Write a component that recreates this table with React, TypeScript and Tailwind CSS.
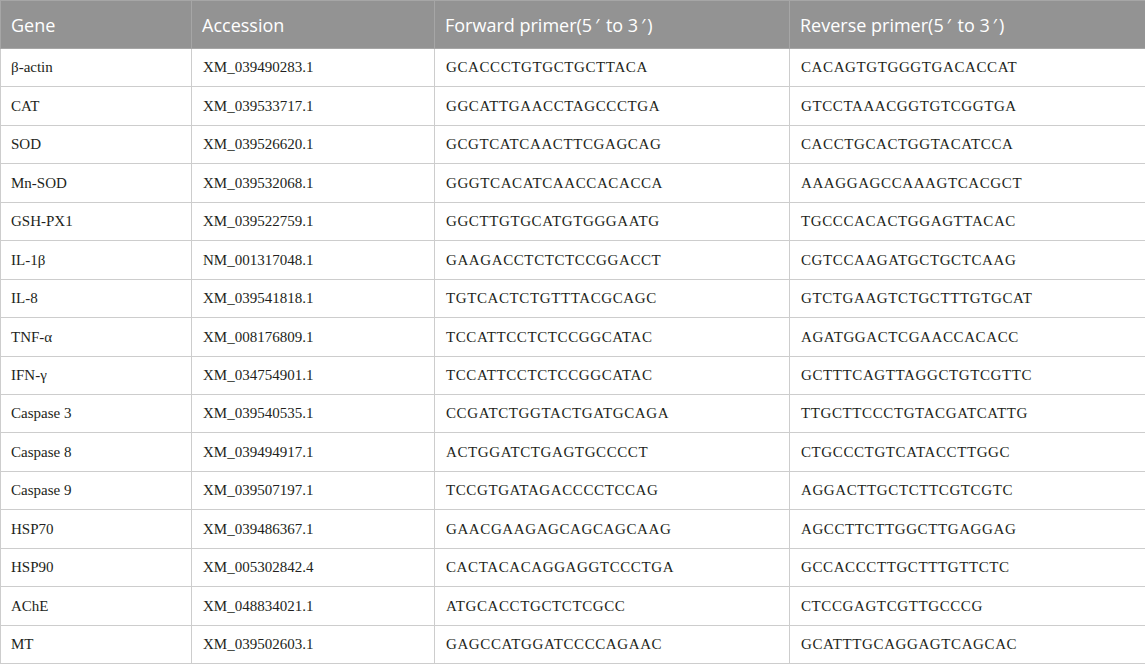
import React from "react";

interface PrimerRow {
    gene: string;
    accession: string;
    forward: string;
    reverse: string;
}

const rows: PrimerRow[] = [
    { gene: "β-actin", accession: "XM_039490283.1", forward: "GCACCCTGTGCTGCTTACA", reverse: "CACAGTGTGGGTGACACCAT" },
    { gene: "CAT", accession: "XM_039533717.1", forward: "GGCATTGAACCTAGCCCTGA", reverse: "GTCCTAAACGGTGTCGGTGA" },
    { gene: "SOD", accession: "XM_039526620.1", forward: "GCGTCATCAACTTCGAGCAG", reverse: "CACCTGCACTGGTACATCCA" },
    { gene: "Mn-SOD", accession: "XM_039532068.1", forward: "GGGTCACATCAACCACACCA", reverse: "AAAGGAGCCAAAGTCACGCT" },
    { gene: "GSH-PX1", accession: "XM_039522759.1", forward: "GGCTTGTGCATGTGGGAATG", reverse: "TGCCCACACTGGAGTTACAC" },
    { gene: "IL-1β", accession: "NM_001317048.1", forward: "GAAGACCTCTCTCCGGACCT", reverse: "CGTCCAAGATGCTGCTCAAG" },
    { gene: "IL-8", accession: "XM_039541818.1", forward: "TGTCACTCTGTTTACGCAGC", reverse: "GTCTGAAGTCTGCTTTGTGCAT" },
    { gene: "TNF-α", accession: "XM_008176809.1", forward: "TCCATTCCTCTCCGGCATAC", reverse: "AGATGGACTCGAACCACACC" },
    { gene: "IFN-γ", accession: "XM_034754901.1", forward: "TCCATTCCTCTCCGGCATAC", reverse: "GCTTTCAGTTAGGCTGTCGTTC" },
    { gene: "Caspase 3", accession: "XM_039540535.1", forward: "CCGATCTGGTACTGATGCAGA", reverse: "TTGCTTCCCTGTACGATCATTG" },
    { gene: "Caspase 8", accession: "XM_039494917.1", forward: "ACTGGATCTGAGTGCCCCT", reverse: "CTGCCCTGTCATACCTTGGC" },
    { gene: "Caspase 9", accession: "XM_039507197.1", forward: "TCCGTGATAGACCCCTCCAG", reverse: "AGGACTTGCTCTTCGTCGTC" },
    { gene: "HSP70", accession: "XM_039486367.1", forward: "GAACGAAGAGCAGCAGCAAG", reverse: "AGCCTTCTTGGCTTGAGGAG" },
    { gene: "HSP90", accession: "XM_005302842.4", forward: "CACTACACAGGAGGTCCCTGA", reverse: "GCCACCCTTGCTTTGTTCTC" },
    { gene: "AChE", accession: "XM_048834021.1", forward: "ATGCACCTGCTCTCGCC", reverse: "CTCCGAGTCGTTGCCCG" },
    { gene: "MT", accession: "XM_039502603.1", forward: "GAGCCATGGATCCCCAGAAC", reverse: "GCATTTGCAGGAGTCAGCAC" },
];

// prime sign sits a little away from the digit, like the original typesetting
const Prime: React.FC = () => <span className="ml-[3px] mr-[2px]">′</span>;

const PrimerHeader: React.FC<{ label: string }> = ({ label }) => (
    <>
        {label} primer(5<Prime />
        {" "}to 3<Prime />)
    </>
);

const App: React.FC = () => {
    const thClass =
        "border border-[#a6a6a6] px-[10px] pt-[2px] text-left align-middle font-normal text-white text-[18px] font-['Open_Sans',sans-serif]";
    const tdClass = "border border-[#cdcdcd] px-[11px]";

    return (
        <div className="w-[1145px] h-[664px] bg-white overflow-hidden">
            <table className="w-[1145px] border-collapse table-fixed">
                <colgroup>
                    <col className="w-[191px]" />
                    <col className="w-[243px]" />
                    <col className="w-[355px]" />
                    <col className="w-[356px]" />
                </colgroup>
                <thead>
                    <tr className="h-[48px] bg-[#939393]">
                        <th className={thClass}>Gene</th>
                        <th className={thClass}>Accession</th>
                        <th className={thClass}>
                            <PrimerHeader label="Forward" />
                        </th>
                        <th className={thClass}>
                            <PrimerHeader label="Reverse" />
                        </th>
                    </tr>
                </thead>
                <tbody className="font-['Liberation_Serif',serif] text-[15px] text-[#231f20]">
                    {rows.map((r) => (
                        <tr key={r.gene} className="h-[38.45px]">
                            <td className="border border-[#cdcdcd] px-[10px]">{r.gene}</td>
                            <td className={tdClass}>{r.accession}</td>
                            <td className={`${tdClass} tracking-[0.6px]`}>{r.forward}</td>
                            <td className={`${tdClass} tracking-[0.6px]`}>{r.reverse}</td>
                        </tr>
                    ))}
                </tbody>
            </table>
        </div>
    );
};

export default App;
